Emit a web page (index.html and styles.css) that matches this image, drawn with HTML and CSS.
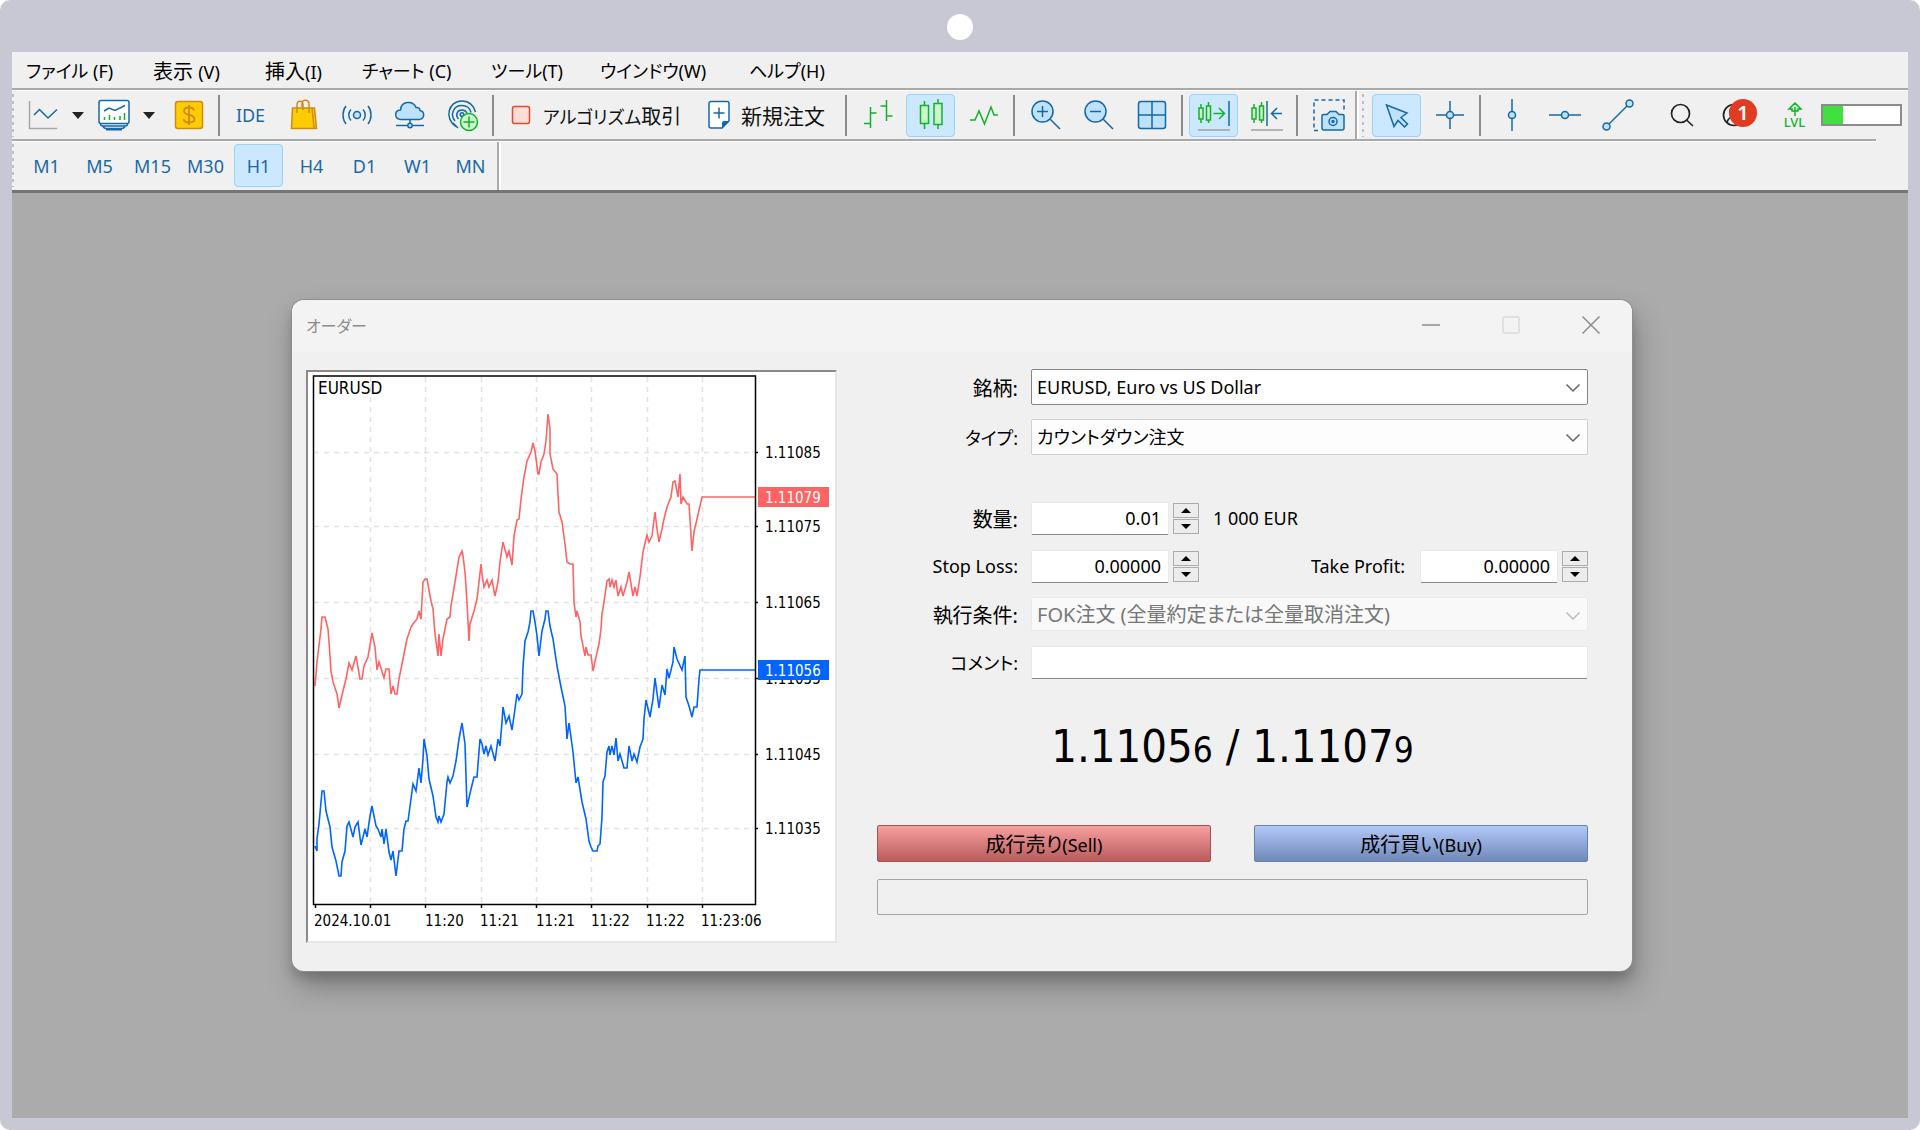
FILE: index.html
```html
<!DOCTYPE html>
<html lang="ja">
<head>
<meta charset="utf-8">
<title>オーダー</title>
<link rel="stylesheet" href="styles.css">
</head>
<body>
<div class="frame">
  <div class="notch"></div>
  <div class="app">
    <nav class="menubar">
      <a href="#" class="kana">ファイル <span class="lat">(F)</span></a>
      <a href="#">表示 <span class="lat">(V)</span></a>
      <a href="#">挿入<span class="lat">(I)</span></a>
      <a href="#" class="kana">チャート <span class="lat">(C)</span></a>
      <a href="#" class="kana">ツール<span class="lat">(T)</span></a>
      <a href="#" class="kana">ウインドウ<span class="lat">(W)</span></a>
      <a href="#" class="kana">ヘルプ<span class="lat">(H)</span></a>
    </nav>

    <div class="toolbar">
      <span class="grip"></span>
      <button class="tool split" aria-label="チャート">
        <svg class="icon" viewBox="0 0 32 32"><path d="M2.500 2V29.500H30" stroke="#a8a8a8" stroke-width="1.500"/><path class="b" d="M7 16l5.500-5.500 8.500 8.500 9-8.500"/></svg>
        <svg class="caret" viewBox="0 0 12 7"><path d="M0 0h12L6 7z"/></svg>
      </button>
      <button class="tool split" aria-label="プロファイル">
        <svg class="icon" viewBox="0 0 32 32"><rect class="b" x="1" y="1.500" width="30" height="23" rx="2" fill="#fff"/><path class="b" d="M2.500 25c0 1.500 1 2 2.500 2h22c1.500 0 2.500-.5 2.500-2M5 27.500c1 1.500 2 2 3 2h16c1 0 2-.5 3-2M8 30.800h16"/><path class="b" d="M6 12l5-3 6 2.500L27 6.500"/><path class="g" d="M6.500 21v-3M11.500 21v-5M16.500 21v-3M22 21v-4M26.500 21v-7" stroke-width="2"/></svg>
        <svg class="caret" viewBox="0 0 12 7"><path d="M0 0h12L6 7z"/></svg>
      </button>
      <button class="tool" aria-label="入金">
        <svg class="icon" viewBox="0 0 32 32"><rect x="2.500" y="2.500" width="27" height="27" rx="2.500" fill="#fc0" stroke="#d08a10" stroke-width="1.500"/><path d="M21 11.500c-.5-2-2.500-3-5-3s-5 1-5 3.500c0 5.500 10.500 2.500 10.500 8 0 2.500-2.500 3.500-5.500 3.500s-5-1-5.500-3.500M16 6v20" stroke="#d08a10" stroke-width="1.800"/></svg>
      </button>
      <span class="sep"></span>
      <button class="tool lat">IDE</button>
      <button class="tool" aria-label="マーケット">
        <svg class="icon" viewBox="0 0 32 32"><path d="M4.500 9h22l2 20.500h-25z" fill="#fc0" stroke="#d08a10" stroke-width="1.500"/><path d="M24 9l2 20M9 14V6c0-5 6-5 6 0v5M14 8V5c0-5 7-5 7 0v9" stroke="#d08a10" stroke-width="1.500"/></svg>
      </button>
      <button class="tool" aria-label="シグナル">
        <svg class="icon" viewBox="0 0 32 32"><circle class="b f" cx="16" cy="16" r="3.500"/><path class="b" d="M10 10.500c-3 3-3 8 0 11M22 10.500c3 3 3 8 0 11M5 7c-4 5-4 13 0 18M27 7c4 5 4 13 0 18"/></svg>
      </button>
      <button class="tool" aria-label="VPS">
        <svg class="icon" viewBox="0 0 32 32"><path class="b f" d="M7 20.500c-7-.5-7-9-.5-9.500C7 2 19 1 22 8.500c3-.5 4 1.500 4 3 5 1 5 8.500-1 9z"/><path class="b" d="M16 21v3M2 26.500h11M19 26.500h11"/><circle class="b f" cx="16" cy="26.500" r="2.200"/></svg>
      </button>
      <button class="tool" aria-label="コミュニティ">
        <svg class="icon" viewBox="0 0 32 32"><path class="b" d="M9 27.500C-3 20 1 2 15 2c7 0 12 4.500 13.500 11M8 22C3 16 6 6.500 15 6.500c5 0 8 3 9 7M11.500 20C8 16 10 11 15 11c2.500 0 4 1 5 3M6 24l5 5"/><circle class="b" cx="15" cy="15.500" r="1.800"/><circle cx="22" cy="23" r="8.500" fill="#c9f7c9" stroke="#13b02c" stroke-width="1.500"/><path class="g" d="M22 17.500v11M16.500 23h11"/></svg>
      </button>
      <span class="sep"></span>
      <button class="tool wide algo kana"><svg class="sq" viewBox="0 0 20 20"><rect x="1.500" y="1.500" width="17" height="17" rx="2" fill="#ffdcd6" stroke="#e04a32" stroke-width="1.500"/></svg><span>アルゴリズム<span class="kanji">取引</span></span></button>
      <button class="tool wide order"><svg class="page" viewBox="0 0 24 30"><path class="b" d="M4 1.500h16a2 2 0 012 2V21l-7 7H4a2 2 0 01-2-2V3.500a2 2 0 012-2z" fill="#fff"/><path d="M22 21l-7 7.500V23a2 2 0 012-2z" fill="#1568a8"/><path class="b" d="M12 7.500v11M6.500 13h11"/></svg>新規注文</button>
      <span class="sep"></span>
      <button class="tool" aria-label="バーチャート">
        <svg class="icon" viewBox="0 0 32 32"><path class="g" d="M8.500 8v21M8.500 14h6M2 24.500h6.500M24.500 1v21M18.500 7h6M24.500 17h6"/></svg>
      </button>
      <button class="tool on" aria-label="ローソク足">
        <svg class="icon" viewBox="0 0 32 32"><path class="g" d="M9.500 2v28M23 0v30"/><rect class="g gf" x="5.500" y="6.500" width="8" height="18"/><rect class="g gf" x="19" y="4.500" width="8" height="21"/></svg>
      </button>
      <button class="tool" aria-label="ラインチャート">
        <svg class="icon" viewBox="0 0 32 32"><path class="g" d="M2 21h5l4-9 5.500 13L23 8l3 8h4"/></svg>
      </button>
      <span class="sep"></span>
      <button class="tool" aria-label="拡大">
        <svg class="icon" viewBox="0 0 32 32"><circle class="b f" cx="12.500" cy="12.500" r="10.500"/><path class="b" d="M20 20l10 10M12.500 7v11M7 12.500h11"/></svg>
      </button>
      <button class="tool" aria-label="縮小">
        <svg class="icon" viewBox="0 0 32 32"><circle class="b f" cx="12.500" cy="12.500" r="10.500"/><path class="b" d="M20 20l10 10M7 12.500h11"/></svg>
      </button>
      <button class="tool" aria-label="整列">
        <svg class="icon" viewBox="0 0 32 32"><rect class="b f" x="2.500" y="2.500" width="27" height="27" rx="2.500"/><path class="b" d="M16 3v26M3 16h26"/></svg>
      </button>
      <span class="sep"></span>
      <button class="tool on" aria-label="自動スクロール">
        <svg class="icon" viewBox="0 0 32 32"><path class="g" d="M3 5v19M10.500 3v21M15.500 14.500h11M21 9l5.500 5.500L21 20"/><path class="g gf" d="M1 9h4v11H1zM8.500 7h4v14h-4z"/><path class="b" d="M31 2v25"/><path d="M0 31h32" stroke="#a0a0a0" stroke-width="1.500"/></svg>
      </button>
      <button class="tool" aria-label="チャートシフト">
        <svg class="icon" viewBox="0 0 32 32"><path class="g" d="M3 5v19M10.500 3v21"/><path class="g gf" d="M1 9h4v11H1zM8.500 7h4v14h-4z"/><path class="b" d="M16 2v25M31 14.500H21M26 9l-5.500 5.500L26 20"/><path d="M0 31h32" stroke="#a0a0a0" stroke-width="1.500"/></svg>
      </button>
      <span class="sep"></span>
      <button class="tool" aria-label="スクリーンショット">
        <svg class="icon" viewBox="0 0 32 32"><path class="b" d="M5 31.500H1V1h30v12" stroke-dasharray="4 3"/><path class="b f" d="M9 17c0-1 1-1.500 2-1.500h3l3-3h6l3 3h3c1 0 2 .5 2 1.500v12c0 1-1 2-2 2H11c-1 0-2-1-2-2z"/><circle class="b" cx="20" cy="22.500" r="4"/><circle class="b" cx="20" cy="22.500" r="1"/></svg>
      </button>
      <span class="divider"></span>
      <span class="grip"></span>
      <button class="tool on" aria-label="カーソル">
        <svg class="icon" viewBox="0 0 32 32"><path class="b f" d="M5.500 6l20.500 8-6 4.500 6.500 6.500-3 3-6.500-6.500-4 6z"/></svg>
      </button>
      <button class="tool" aria-label="十字カーソル">
        <svg class="icon" viewBox="0 0 32 32"><path class="b" d="M16 2v28M2 16h28"/><circle class="b f" cx="16" cy="16" r="3.500"/></svg>
      </button>
      <span class="sep"></span>
      <button class="tool" aria-label="垂直線">
        <svg class="icon" viewBox="0 0 32 32"><path class="b" d="M16 0v32"/><circle class="b f" cx="16" cy="16" r="3.500"/></svg>
      </button>
      <button class="tool" aria-label="水平線">
        <svg class="icon" viewBox="0 0 32 32"><path class="b" d="M0 16h32"/><circle class="b f" cx="16" cy="16" r="3.500"/></svg>
      </button>
      <button class="tool" aria-label="トレンドライン">
        <svg class="icon" viewBox="0 0 32 32"><path class="b" d="M4 28L28 4"/><circle class="b f" cx="4.500" cy="27.500" r="3.500"/><circle class="b f" cx="27.500" cy="4.500" r="3.500"/></svg>
      </button>
      <span class="right">
        <button class="tool" aria-label="検索">
          <svg class="icon" viewBox="0 0 32 32"><circle class="k" cx="14.500" cy="14.500" r="9"/><path class="k" d="M20.500 21l6.500 6"/></svg>
        </button>
        <button class="tool account" aria-label="通知">
          <svg class="icon" viewBox="0 0 32 32"><circle class="k" cx="15" cy="16" r="10.500"/><circle class="k" cx="15" cy="12.500" r="4"/><path class="k" d="M8 24c1-8 13-8 14 0"/></svg>
          <span class="badge">1</span>
        </button>
        <span class="lvl"><svg viewBox="0 0 16 14"><path class="g" d="M8 1L2 7h3v2h6V7h3zM8 5v9" fill="#c9f7c9"/></svg>LVL</span>
        <span class="battery"><span class="charge"></span></span>
      </span>
    </div>
    <div class="rule"></div>

    <div class="timeframes">
      <span class="grip"></span>
      <button class="tool lat">M1</button>
      <button class="tool lat">M5</button>
      <button class="tool lat">M15</button>
      <button class="tool lat">M30</button>
      <button class="tool lat on">H1</button>
      <button class="tool lat">H4</button>
      <button class="tool lat">D1</button>
      <button class="tool lat">W1</button>
      <button class="tool lat">MN</button>
      <span class="divider"></span>
    </div>

    <main class="workspace">
      <section class="dialog">
        <header class="titlebar">
          <h1>オーダー</h1>
          <button class="win" aria-label="最小化"><svg viewBox="0 0 18 18"><path d="M0 9h18" stroke="#8c8c8c"/></svg></button>
          <button class="win" aria-label="最大化"><svg viewBox="0 0 18 18"><rect x="1" y="1" width="16" height="16" rx="1" stroke="#dcdcdc"/></svg></button>
          <button class="win" aria-label="閉じる"><svg viewBox="0 0 18 18"><path d="M.5.5l17 17M17.500.5l-17 17" stroke="#8c8c8c"/></svg></button>
        </header>
        <div class="body">
          <div class="chart">
            <svg viewBox="308 373 527 568">
              <g class="grid">
                <path d="M314 453.500H755M314 527.500H755M314 603.500H755M314 679.500H755M314 755.500H755M314 829.500H755"/>
                <path d="M370.500 378V905M425.500 378V905M481.500 378V905M536.500 378V905M591.500 378V905M647.500 378V905M702.500 378V905"/>
              </g>
              <path class="ask" d="M315 687L317 663 321 630 322 618H325L328 630 329 643 331 672 333 683 337 695 339 709 343 692 346 680 349 664 352 671 356 657 360 680H362L364 667 368 658 372 634 375 648 377 671 379 663 384 679 386 670H389L391 695 393 687 395 695H397L399 680 403 660 407 640 411 628 413 625 417 620 419 612 421 620 423 583 425 580H427L431 602 433 610 435 635 438 657 439 635 441 657 443 640 447 620 450 618 451 607 455 583 459 558 462 552 463 557 465 573 467 603 469 642 470 625 474 612 477 600 479 583 481 565 482 575 484 588 487 581 489 588 492 581 495 597 498 583 500 563 503 543 507 558 509 552 512 566 514 537 517 521 519 520 521 500 524 478 527 462 531 453 533 444 535 452 538 475H539L541 463 544 455 546 442 548 415 550 430V455L553 470 557 475 558 495 559 513 562 523 565 545 567 563 570 565H573L574 603 576 618 577 612 580 623 581 637 585 657 586 648 588 656H591L593 672 596 658 599 645 601 630 602 615 604 603 607 582 609 580 610 588 612 581 614 588 616 581 618 597 621 588 623 597 627 583 629 573 633 597 635 588 637 597 640 578 643 553 646 540 647 536 649 543 652 537 655 513 657 530 659 543 662 530 664 520 667 508 671 498 673 483 675 482 678 498 680 475 681 505 683 498 687 505H689L692 552 694 533 697 520 702 498H755"/>
              <path class="bid" d="M315 847L317 852V840L319 825 322 792H324L326 812 330 828 332 848 336 862 339 877H341L342 863 345 852 347 827 349 823 353 838 355 828 358 823 361 846 365 830 367 838 370 817 372 807 376 827 378 830 381 838 382 830 384 845 386 830 389 853 391 861 393 852 396 877 399 852H402L404 830 406 822H408L411 800 413 785 416 792 419 769 421 784 423 760 424 740 427 757 429 780 433 797 436 818 438 823 439 817 441 823 444 815 447 783 448 778 450 784 453 777 456 762 459 740 462 724 465 745 466 777 467 808 471 790 474 778H477L479 753 480 740 482 745 484 755 486 747 488 756 491 747 495 762 498 740 500 747 502 723 503 708 506 724 509 717 512 731 514 717 517 695 519 701 522 695 523 668 525 642 528 633 530 623 531 612H533L535 623 537 637 539 657 542 632 545 620 546 612H548L550 627 553 640 557 667 561 688 565 707 567 740 569 724 573 753 576 784 578 778 582 803 586 820 589 842 591 848 593 852H597L598 847 600 845 602 818 603 783 605 777 607 753 609 747 610 756 612 747 614 756 616 739 618 762 620 755 624 769H627L629 747 632 762 634 755 637 763 640 748 643 740 644 720 646 701 650 718 653 700 655 679 659 709 662 686 665 696 667 670 669 679 673 663 674 648 677 660 682 671 685 657 686 698 689 707 692 718 694 708H697L699 680 700 671H755"/>
              <path class="axis" d="M313.500 377H755.500V905.500H313.500zM755 453.500h3M755 527.500h3M755 603.500h3M755 679.500h3M755 755.500h3M755 829.500h3M315.500 905v4M370.500 905v4M425.500 905v4M481.500 905v4M536.500 905v4M591.500 905v4M647.500 905v4M702.500 905v4"/>
              <text x="318" y="395" class="symbol">EURUSD</text>
              <text x="765" y="459">1.11085</text>
              <text x="765" y="533">1.11075</text>
              <text x="765" y="609">1.11065</text>
              <text x="765" y="685">1.11055</text>
              <text x="765" y="761">1.11045</text>
              <text x="765" y="835">1.11035</text>
              <rect x="758" y="488" width="71" height="20" fill="#ff6464"/>
              <text x="765" y="504" class="tag">1.11079</text>
              <rect x="758" y="661" width="71" height="20" fill="#0064ff"/>
              <text x="765" y="677" class="tag">1.11056</text>
              <text x="314" y="927">2024.10.01</text>
              <text x="425" y="927">11:20</text>
              <text x="480" y="927">11:21</text>
              <text x="536" y="927">11:21</text>
              <text x="591" y="927">11:22</text>
              <text x="646" y="927">11:22</text>
              <text x="701" y="927">11:23:06</text>
            </svg>
          </div>

          <form class="form">
            <div class="row">
              <label for="symbol">銘柄:</label>
              <div class="combo strong"><select id="symbol" class="lat"><option>EURUSD, Euro vs US Dollar</option></select><svg viewBox="0 0 14 8"><path d="M.5.5L7 7l6.500-6.500"/></svg></div>
            </div>
            <div class="row type">
              <label for="type" class="kana">タイプ:</label>
              <div class="combo"><select id="type" class="kana"><option>カウントダウン注文</option></select><svg viewBox="0 0 14 8"><path d="M.5.5L7 7l6.500-6.500"/></svg></div>
            </div>
            <div class="row">
              <label for="volume">数量:</label>
              <input id="volume" class="num" type="text" value="0.01">
              <span class="spin"><button type="button" aria-label="増やす"><svg viewBox="0 0 10 5"><path d="M0 5h10L5 0z"/></svg></button><button type="button" aria-label="減らす"><svg viewBox="0 0 10 5"><path d="M0 0h10L5 5z"/></svg></button></span>
              <span class="units lat">1 000 EUR</span>
            </div>
            <div class="row">
              <label for="sl" class="lat">Stop Loss:</label>
              <input id="sl" class="num" type="text" value="0.00000">
              <span class="spin"><button type="button" aria-label="増やす"><svg viewBox="0 0 10 5"><path d="M0 5h10L5 0z"/></svg></button><button type="button" aria-label="減らす"><svg viewBox="0 0 10 5"><path d="M0 0h10L5 5z"/></svg></button></span>
              <label for="tp" class="lat second">Take Profit:</label>
              <input id="tp" class="num" type="text" value="0.00000">
              <span class="spin"><button type="button" aria-label="増やす"><svg viewBox="0 0 10 5"><path d="M0 5h10L5 0z"/></svg></button><button type="button" aria-label="減らす"><svg viewBox="0 0 10 5"><path d="M0 0h10L5 5z"/></svg></button></span>
            </div>
            <div class="row">
              <label for="fill">執行条件:</label>
              <div class="combo off"><select id="fill" disabled><option>FOK注文 (全量約定または全量取消注文)</option></select><svg viewBox="0 0 14 8"><path d="M.5.5L7 7l6.500-6.500"/></svg></div>
            </div>
            <div class="row">
              <label for="comment" class="kana">コメント:</label>
              <input id="comment" class="text" type="text">
            </div>
            <p class="price">1.1105<small>6</small> / 1.1107<small>9</small></p>
            <div class="actions">
              <button type="button" class="sell">成行売り<span class="lat">(Sell)</span></button>
              <button type="button" class="buy">成行買い<span class="lat">(Buy)</span></button>
            </div>
            <div class="status"></div>
          </form>
        </div>
      </section>
    </main>
  </div>
</div>
</body>
</html>
```
FILE: styles.css
```css
* { box-sizing: border-box; }
body {
  margin: 0;
  background: #fff;
  color: #000;
  font-family: "Noto Sans", "Noto Sans CJK JP", sans-serif;
  font-size: 20px;
  font-feature-settings: "palt";
}
button, input, select {
  font: inherit;
  font-feature-settings: inherit;
  color: inherit;
  margin: 0;
  padding: 0;
  border: 0;
  background: none;
}
a { color: inherit; text-decoration: none; }
svg { display: block; fill: none; overflow: visible; }
.lat, .kana { font-size: 18px; }
.kanji { font-size: 20px; }

.frame {
  min-height: 100vh;
  display: flex;
  flex-direction: column;
  padding: 0 12px 12px;
  background: #c8c7d4;
  border-radius: 10px;
}
.notch {
  width: 26px;
  height: 26px;
  margin: 14px auto 12px;
  border-radius: 50%;
  background: #fff;
}
.app {
  flex: 1;
  display: flex;
  flex-direction: column;
  background: #f0f0f0;
}

.menubar {
  display: grid;
  grid-template-columns: 127px 112px 97px 129px 109px 149px auto;
  align-items: center;
  height: 38px;
  padding-left: 14px;
  border-bottom: 2px solid #a9a9a9;
  box-shadow: 0 1px #fff;
  white-space: nowrap;
}

.toolbar, .timeframes { display: flex; align-items: center; }
.toolbar { height: 49px; padding-top: 1px; }
.rule { height: 3px; margin-right: 32px; background: #fff; border-top: 2px solid #a9a9a9; }
.timeframes { height: 51px; border-bottom: 3px solid #757575; padding-bottom: 1px; }
.grip {
  width: 8px;
  height: 43px;
  flex: none;
  background: repeating-linear-gradient(#c0c0c0 0 3px, #f0f0f0 3px 7px) no-repeat 0 0 / 2px 100%;
}
.tool {
  flex: none;
  width: 53px;
  height: 43px;
  display: flex;
  align-items: center;
  justify-content: center;
  color: #1b69a5;
  border: 1px solid transparent;
  border-radius: 4px;
  white-space: nowrap;
}
.tool.on {
  width: 49px;
  margin: 0 2px;
  background: #cce8ff;
  border: 1px solid #99d1ff;
}
.split { width: 71px; gap: 13px; }
.wide { color: #111; justify-content: flex-start; }
.algo { width: 196px; padding-left: 12px; gap: 12px; }
.order { width: 148px; padding-left: 12px; gap: 10px; font-size: 21px; }
.icon { width: 32px; height: 32px; flex: none; }
.caret { width: 12px; height: 7px; fill: #222; }
.sq { width: 20px; height: 20px; flex: none; }
.page { width: 24px; height: 30px; flex: none; }
.b { stroke: #1568a8; stroke-width: 1.5px; }
.f { fill: #bfe2fc; }
.g { stroke: #13b02c; stroke-width: 1.5px; }
.gf { fill: #c9f7c9; }
.k { stroke: #222; stroke-width: 1.7px; }
.sep {
  flex: none;
  width: 9px;
  height: 41px;
  border-left: 3px solid transparent;
  background: linear-gradient(#8c8c8c, #8c8c8c) no-repeat 0 0 / 2px 100%;
  background-clip: padding-box;
}
.divider {
  flex: none;
  width: 7px;
  height: 48px;
  border-left: 2px solid #a9a9a9;
  box-shadow: inset 2px 0 #fff;
}
.right { margin-left: auto; display: flex; align-items: center; padding-right: 6px; }
.account { position: relative; }
.badge {
  position: absolute;
  left: 20px;
  top: 4px;
  width: 28px;
  height: 28px;
  border-radius: 50%;
  background: #e03c24;
  color: #fff;
  font-size: 20px;
  font-weight: 600;
  line-height: 28px;
  text-align: center;
}
.lvl {
  width: 60px;
  padding-left: 7px;
  color: #13b02c;
  font-size: 13px;
  font-weight: 500;
  line-height: 13px;
  display: flex;
  flex-direction: column;
  align-items: center;
}
.lvl svg { width: 16px; height: 14px; }
.battery {
  width: 81px;
  height: 22px;
  border: 2px solid #8c8c8c;
  background: #fff;
}
.charge { display: block; width: 26%; height: 100%; background: #40e040; }

.workspace { flex: 1; background: #ababab; padding: 107px 10px 60px 14px; }
.dialog {
  max-width: 1340px;
  margin: 0 auto;
  border-radius: 12px;
  background: #f0f0f0;
  box-shadow: 0 0 0 1px #8e8e8e, 0 8px 12px rgba(0, 0, 0, .16), 4px 16px 30px rgba(0, 0, 0, .26);
}
.titlebar {
  display: flex;
  align-items: center;
  height: 52px;
  padding: 0 32px 2px 14px;
  background: #f3f3f3;
  border-radius: 12px 12px 0 0;
}
.titlebar h1 { flex: 1; margin: 0; font-size: 16px; font-weight: 400; color: #8c8c8c; }
.win { margin-left: 62px; }
.win svg { width: 18px; height: 18px; stroke-width: 1.5px; }
.body { display: flex; gap: 40px; padding: 18px 44px 28px 14px; }

.chart {
  flex: none;
  width: 531px;
  height: 573px;
  background: #fff;
  border: 2px solid;
  border-color: #8a8a8a #e6e6e6 #e6e6e6 #8a8a8a;
}
.chart svg { width: 527px; height: 568px; }
.chart text { font-family: "DejaVu Sans Condensed", "Noto Sans", sans-serif; font-size: 15px; fill: #000; }
.chart .symbol { font-size: 17px; }
.chart .tag { fill: #fff; }
.grid { stroke: #e2e2e2; stroke-width: 1.5px; stroke-dasharray: 5 5; }
.axis { stroke: #000; stroke-width: 1.5px; }
.ask { stroke: #ff6464; stroke-width: 1.6px; }
.bid { stroke: #0064ff; stroke-width: 1.6px; }

.form { flex: 1; display: flex; flex-direction: column; gap: 14px; }
.row { display: flex; align-items: center; height: 34px; }
.row > label { width: 141px; margin-right: 13px; text-align: right; white-space: nowrap; }
.row.type { margin: 1px 0 32px; height: 36px; }
.combo {
  position: relative;
  flex: 1;
  height: 36px;
  background: #fdfdfd;
  border: 1px solid #d0d0d0;
  border-radius: 2px;
}
.combo.strong { background: #fff; border-color: #868686; }
.combo.off { height: 34px; background: #f9f9f9; border-color: #eaeaea; color: #777; }
.combo select {
  appearance: none;
  width: 100%;
  height: 100%;
  padding: 0 28px 0 5px;
  opacity: 1;
}
.combo svg { position: absolute; right: 7px; top: 14px; width: 14px; height: 8px; stroke: #666; stroke-width: 1.5px; pointer-events: none; }
.combo.off svg { stroke: #bbb; }
.num, .text {
  height: 33px;
  background: #fff;
  border: 1px solid #eaeaea;
  border-bottom-color: #868686;
  border-radius: 2px;
}
.num { width: 138px; padding-right: 7px; text-align: right; font-size: 18px; }
.text { flex: 1; min-width: 0; padding: 0 5px; }
.spin { display: flex; flex-direction: column; gap: 1px; margin-left: 4px; }
.spin button {
  width: 26px;
  height: 15px;
  display: grid;
  place-items: center;
  background: #ececec;
  border: 1px solid #acacac;
}
.spin svg { width: 10px; height: 5px; fill: #000; }
.units { margin-left: 14px; }
.row > .second { width: auto; margin-left: auto; margin-right: 15px; }

.price {
  margin: 24px 0 34px;
  height: 60px;
  line-height: 60px;
  text-align: center;
  font-family: "DejaVu Sans Condensed", "Noto Sans", sans-serif;
  font-size: 45px;
  white-space: nowrap;
}
.price small { font-size: 35px; }
.actions { display: grid; grid-template-columns: 1fr 1fr; gap: 43px; margin-bottom: 3px; }
.actions button { height: 37px; border: 1px solid; border-radius: 2px; }
.actions .sell { background: linear-gradient(#f89f9f, #b85c5c); border-color: #a85050; }
.actions .buy { background: linear-gradient(#b2c9f8, #7088b8); border-color: #6a80b0; }
.status { height: 36px; border: 1px solid #a6a6a6; border-radius: 2px; }
```
